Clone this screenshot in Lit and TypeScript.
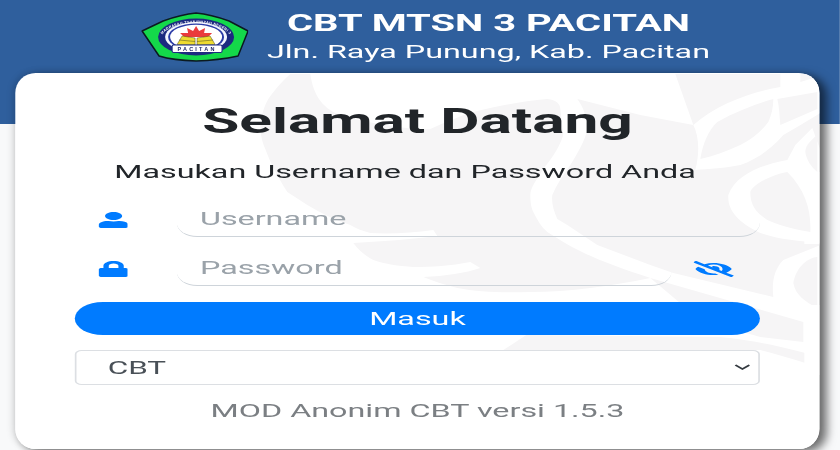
import { LitElement, html, css, svg } from "lit";
import { customElement } from "lit/decorators.js";

const USER = "M224 256c70.7 0 128-57.3 128-128S294.7 0 224 0 96 57.3 96 128s57.3 128 128 128zm89.6 32h-16.7c-22.2 10.2-46.9 16-72.9 16s-50.6-5.8-72.9-16h-16.7C60.2 288 0 348.2 0 422.4V464c0 26.5 21.5 48 48 48h352c26.5 0 48-21.5 48-48v-41.6c0-74.2-60.2-134.4-134.4-134.4z";
const LOCK = "M400 224h-24v-72C376 68.2 307.8 0 224 0S72 68.2 72 152v72H48c-26.5 0-48 21.5-48 48v192c0 26.5 21.5 48 48 48h352c26.5 0 48-21.5 48-48V272c0-26.5-21.5-48-48-48zm-104 0H152v-72c0-39.7 32.3-72 72-72s72 32.3 72 72v72z";
const EYE = "M320 400c-75.85 0-137.25-58.71-142.9-133.11L72.2 185.82c-13.79 17.3-26.48 35.59-36.72 55.59a32.35 32.35 0 0 0 0 29.19C89.71 376.41 197.07 448 320 448c26.91 0 52.87-4 77.89-10.46L346 397.39a144.13 144.13 0 0 1-26 2.61zm313.82 58.1l-110.55-85.44a331.25 331.25 0 0 0 81.25-102.07 32.35 32.35 0 0 0 0-29.19C550.29 135.59 442.93 64 320 64a308.15 308.15 0 0 0-147.32 37.7L45.46 3.37A16 16 0 0 0 23 6.18L3.37 31.45A16 16 0 0 0 6.18 53.9l588.36 454.73a16 16 0 0 0 22.46-2.81l19.64-25.27a16 16 0 0 0-2.82-22.45zm-183.72-142l-39.3-30.38A94.75 94.75 0 0 0 416 256a94.76 94.76 0 0 0-121.31-92.21A47.65 47.65 0 0 1 304 192a46.64 46.64 0 0 1-1.54 10l-73.61-56.89A142.31 142.31 0 0 1 320 112a143.92 143.92 0 0 1 144 144c0 21.63-5.29 41.79-13.9 60.11z";

const logo = svg`
  <svg class="logo" viewBox="0 0 108 50" preserveAspectRatio="none">
    <path d="M1 19 L22 9 C33 5 44 2 55 1 C66 2 77 5 88 9 L107 19 L97 44 C83 47 70 48.5 55 49 C40 48.5 28 47 18 44Z" fill="#14d84a" stroke="#0b1a20" stroke-width="1.5" stroke-linejoin="round"/>
    <ellipse cx="55" cy="25" rx="38" ry="18.5" fill="#1c2a80"/>
    <ellipse cx="55" cy="25" rx="31" ry="15" fill="#f4f6ff"/>
    <ellipse cx="55" cy="25" rx="28" ry="13.5" fill="#2a3aa6"/>
    <ellipse cx="55" cy="25" rx="26" ry="12.2" fill="#fff"/>
    <defs><path id="ringarc" d="M20 27 A35 16 0 0 1 90 27"/></defs>
    <text font-family="Liberation Sans, sans-serif" font-size="3.6" font-weight="700" fill="#fff" letter-spacing=".35"><textPath href="#ringarc" startOffset="50%" text-anchor="middle">MADRASAH TSANAWIYAH NEGERI 3</textPath></text>
    <path d="M55 14 L58 19 L64 16 L63 21 L71 21 L67 25 L43 25 L39 21 L47 21 L46 16 L52 19Z" fill="#ea3a3c"/>
    <path d="M36 32.5 L41 24 L54 26 L54 33Z M74 32.5 L69 24 L56 26 L56 33Z" fill="#eedb30" stroke="#48481e" stroke-width=".5"/>
    <path d="M38 28 L54 29.5 M72 28 L56 29.5" stroke="#48481e" stroke-width=".5"/>
    <rect x="31" y="33" width="50" height="7.5" rx="1.5" fill="#fff" stroke="#1c2a80" stroke-width="1.1"/>
    <text x="56" y="39" text-anchor="middle" font-family="Liberation Sans, sans-serif" font-size="5.5" font-weight="700" letter-spacing="2.2" fill="#1a2468">PACITAN</text>
  </svg>`;

const G = "#f6f5f6";
const watermark = svg`
  <svg class="wm" viewBox="15 73 805 376" preserveAspectRatio="none">
    <g fill="${G}">
      <path d="M290,74 L310,74 C313,95 322,110 345,117 C380,125 410,130 430,129 C445,122 460,116 473,112 C500,105 525,101 547,99 C556,100 560,104 560,109 L563,135 C558,150 550,160 543,169 C536,180 530,188 530,195 C530,203 531,208 533,212 C537,220 541,227 547,232 L563,242 C590,258 620,268 650,278 C610,286 570,292 530,292 C500,293 478,292 457,288 C445,285 433,281 423,277 C445,276 465,273 480,268 L470,262 C450,266 432,267 413,267 C398,266 385,264 373,260 C365,256 358,250 353,243 C385,241 415,239 437,236 L433,230 C412,233 390,234 370,233 C362,231 355,228 350,225 C335,220 320,213 307,205 L287,192 C278,178 270,163 265,149 C261,140 260,132 260,125 C261,115 264,106 268,99 C275,89 283,80 290,74Z"/>
      <path d="M577,99 L640,115 L693,125 L675,74 L820,74 L820,245 L783,260 C775,268 771,280 773,297 L673,273 L650,265 L597,245 L567,225 L557,219 C553,210 551,202 552,195 C556,185 563,175 570,165 C578,152 585,140 587,129 C587,118 583,107 577,99Z"/>
      <path d="M650,278 L803,322 L803,342 L760,337 L700,320Z"/>
      <path d="M503,350 L526,335 L720,337 C750,340 780,346 805,353 L805,363 C790,358 775,354 760,350Z"/>
      <path d="M817,257 C805,258 795,270 793,283 C795,295 805,302 817,308Z"/>
    </g>
    <g fill="#fff">
      <path d="M693,125 C715,105 750,92 780,87 L780,74 L800,74 L800,82 L820,76 L820,113 C805,122 795,128 783,135 C770,150 755,160 740,165 C725,168 708,169 695,170 C700,150 698,135 693,125Z"/>
      <path d="M787,160 C760,165 735,175 728,195 C727,210 737,222 760,233 C780,240 800,241 820,243 L820,150 L812,128 L795,145 L787,160Z"/>
      <rect x="804" y="172" width="16" height="72"/>
      <rect x="804" y="305" width="16" height="70"/>
    </g>
    <g fill="${G}">
      <path d="M700,159 C702,145 708,130 717,122 C735,112 755,104 773,99 C773,108 771,115 768,122 C760,133 750,140 740,145 C727,151 713,156 700,159Z"/>
      <path d="M777,99 L817,92 L817,109 L780,125 C779,115 779,107 777,99Z"/>
      <path d="M787,172 C770,175 752,185 750,192 C750,205 755,212 767,220 C785,228 800,230 810,232 C811,210 805,190 787,172Z"/>
      <path d="M817,135 C808,142 805,147 805,152 C806,160 811,167 817,172Z"/>
    </g>
  </svg>`;

@customElement("app-root")
export class AppRoot extends LitElement {
  static styles = css`
    :host { display: block; width: 840px; height: 450px; overflow: hidden; background: #f8f9fa; --k: 1.7; }
    .stage {
      width: calc(840px / var(--k)); height: 450px; transform: scaleX(var(--k)); transform-origin: 0 0;
      font-family: Roboto, "Liberation Sans", sans-serif; color: #212529; filter: blur(0.4px);
    }
    .header {
      height: 124px; background: #2f5f9d; color: #fff; box-sizing: border-box;
      display: grid; grid-template-columns: calc(141px / var(--k)) calc(108px / var(--k)) 1fr; align-items: start;
    }
    .logo { grid-column: 2; width: 100%; height: 50px; margin-top: 12px; display: block; }
    .brand { grid-column: 3; text-align: center; padding: 10px calc(112px / var(--k)) 0 0; }
    .brand div:first-child { font-size: 23.5px; font-weight: 700; line-height: 26px; }
    .brand div:last-child { font-size: 19px; line-height: 32px; }
    .wrap {
      position: relative; height: 376px; margin: -51px calc(20px / var(--k)) 0 calc(15px / var(--k));
      border-radius: 12px / 20px; box-shadow: 4px 3px 7px rgba(0,0,0,.55), -1px 0 6px rgba(0,0,0,.15);
    }
    .card {
      position: relative; overflow: hidden; box-sizing: border-box; height: 376px;
      background: #fff; border-radius: 12px / 20px; padding: 0 calc(60px / var(--k));
    }
    .wm { position: absolute; inset: 0; width: 100%; height: 100%; }
    .body { position: relative; display: flex; flex-direction: column; }
    h1 { margin: 26px 0 0; font-size: 35.5px; line-height: 44px; font-weight: 700; text-align: center; }
    .sub { margin: 17px 0 0; padding-right: calc(25px / var(--k)); font-size: 19px; line-height: 24px; text-align: center; }
    .row { display: grid; align-items: center; height: 37px; grid-template-columns: calc(101px / var(--k)) 1fr; }
    .row.u { margin-top: 16px; }
    .row.p { margin-top: 12px; grid-template-columns: calc(101px / var(--k)) 1fr calc(88px / var(--k)); }
    .ic { display: block; fill: #007bff; margin: 2px 0 0 calc(23px / var(--k)); width: calc(30px / var(--k)); height: 16px; }
    .eye { margin-left: calc(22px / var(--k)); width: calc(40px / var(--k)); }
    input {
      box-sizing: border-box; width: 100%; height: 37px; border: 0; background: transparent; outline: 0;
      border-bottom: 1.5px solid #ced4da; border-radius: 0 0 12px 12px / 0 0 14px 14px;
      font: 19px Roboto, "Liberation Sans", sans-serif; padding: 0 calc(24px / var(--k)); color: #495057;
    }
    input::placeholder { color: #9aa2a9; opacity: 1; }
    button {
      margin-top: 16px; height: 33px; border: 0; border-radius: 17px; background: #007bff; color: #fff; padding: 0;
      font: 400 19px/33px Roboto, "Liberation Sans", sans-serif;
    }
    .sel { position: relative; margin-top: 15px; height: 35px; }
    select {
      appearance: none; display: block; height: 35px; width: 100%; box-sizing: border-box; background: #fff; color: #495057;
      border: 1px solid #dcdfe3; border-radius: 4px; padding: 0 0 0 calc(31px / var(--k));
      font: 18.5px Roboto, "Liberation Sans", sans-serif; outline: 0;
    }
    .chev {
      position: absolute; right: calc(10px / var(--k)); top: 14px; width: calc(16px / var(--k)); height: 6px;
      fill: none; stroke: #343a40; stroke-width: 1.4;
    }
    .foot { margin-top: 14px; font-size: 19px; line-height: 24px; text-align: center; color: #7b7f83; }
  `;

  render() {
    return html`
      <div class="stage">
        <header class="header">
          ${logo}
          <div class="brand"><div>CBT MTSN 3 PACITAN</div><div>Jln. Raya Punung, Kab. Pacitan</div></div>
        </header>
        <div class="wrap">
          <main class="card">
            ${watermark}
            <div class="body">
              <h1>Selamat Datang</h1>
              <p class="sub">Masukan Username dan Password Anda</p>
              <div class="row u">
                <svg class="ic" viewBox="0 0 448 512" preserveAspectRatio="none"><path d="${USER}"/></svg>
                <input placeholder="Username" />
              </div>
              <div class="row p">
                <svg class="ic" viewBox="0 0 448 512" preserveAspectRatio="none"><path d="${LOCK}"/></svg>
                <input type="password" placeholder="Password" />
                <svg class="ic eye" viewBox="0 0 640 512" preserveAspectRatio="none"><path d="${EYE}"/></svg>
              </div>
              <button>Masuk</button>
              <div class="sel">
                <select><option>CBT</option></select>
                <svg class="chev" viewBox="0 0 16 6" preserveAspectRatio="none"><path d="M1 1 L8 5 L15 1" vector-effect="non-scaling-stroke"/></svg>
              </div>
              <div class="foot">MOD Anonim CBT versi 1.5.3</div>
            </div>
          </main>
        </div>
      </div>
    `;
  }
}
